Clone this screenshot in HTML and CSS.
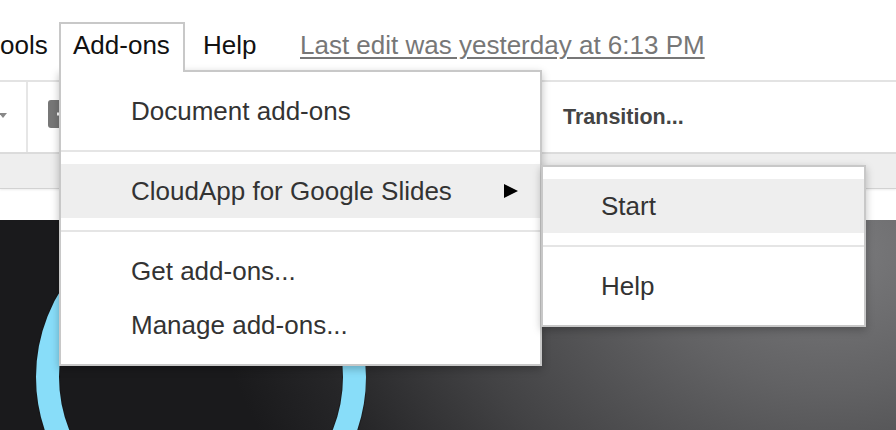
FILE: index.html
```html
<!DOCTYPE html>
<html>
<head>
<meta charset="utf-8">
<link rel="stylesheet" href="styles.css">
</head>
<body>
<div class="app">
  <div class="menubar">
    <span class="mitem tools">ools</span>
    <span class="mitem tab">Add-ons</span>
    <span class="mitem help">Help</span>
    <a class="mitem lastedit">Last edit was yesterday at 6:13 PM</a>
  </div>
  <div class="toolbar">
    <span class="caret"></span>
    <span class="vsep"></span>
    <svg class="newslide" width="30" height="28" viewBox="0 0 30 28">
      <rect x="0" y="0" width="30" height="28" rx="3" fill="#777"/>
      <rect x="9" y="12.5" width="12" height="3" fill="#fff"/>
      <rect x="13.5" y="8" width="3" height="12" fill="#fff"/>
    </svg>
    <span class="transition">Transition...</span>
  </div>
  <div class="strip"></div>
  <div class="gap"></div>
  <div class="slide">
    <svg class="ring" width="330" height="330" viewBox="0 0 330 330">
      <circle cx="165" cy="165" r="153.5" fill="none" stroke="#141416" stroke-width="25" opacity="0.5"/>
      <circle cx="165" cy="165" r="153.5" fill="none" stroke="#88ddf9" stroke-width="23"/>
    </svg>
  </div>

  <div class="menu main">
    <div class="item">Document add-ons</div>
    <div class="sep"></div>
    <div class="item hl">CloudApp for Google Slides<span class="arrow"></span></div>
    <div class="sep"></div>
    <div class="item">Get add-ons...</div>
    <div class="item">Manage add-ons...</div>
  </div>

  <div class="menu sub">
    <div class="item hl">Start</div>
    <div class="sep"></div>
    <div class="item">Help</div>
  </div>
</div>
</body>
</html>
```
FILE: styles.css
```css
html, body {
  margin: 0;
  padding: 0;
  background: #fff;
}
body {
  font-family: "Liberation Sans", Arial, sans-serif;
}
.app {
  position: relative;
  width: 896px;
  height: 430px;
  overflow: hidden;
  background: #fff;
}
.menubar {
  box-sizing: border-box;
  height: 80px;
  padding-top: 22px;
  display: flex;
  align-items: flex-start;
  font-size: 26px;
  color: #111;
}
.mitem {
  display: block;
  flex: none;
  line-height: 43px;
  border-top: 2px solid transparent;
  white-space: nowrap;
}
.tools {
  width: 59px;
}
.tab {
  box-sizing: border-box;
  width: 126px;
  padding: 0 0 5px 12px;
  border: 2px solid #c8c8c8;
  border-bottom: 0;
  background: #fff;
  position: relative;
  z-index: 3;
}
.help {
  margin-left: 18px;
  width: 54px;
}
.lastedit {
  margin-left: 43px;
  color: #777;
  text-decoration: underline;
  text-underline-offset: 3px;
}
.toolbar {
  height: 70px;
  border-top: 2px solid #e3e3e3;
  border-bottom: 2px solid #dcdcdc;
  display: flex;
  align-items: center;
}
.caret {
  width: 0;
  height: 0;
  margin-left: -1px;
  border-top: 5px solid #888;
  border-left: 4px solid transparent;
  border-right: 4px solid transparent;
  margin-top: -4px;
}
.vsep {
  align-self: stretch;
  width: 2px;
  margin-left: 19px;
  background: #e6e6e6;
}
.newslide {
  align-self: flex-start;
  margin-top: 18px;
  margin-left: 20px;
}
.transition {
  margin-left: 485px;
  font-size: 21.5px;
  font-weight: bold;
  color: #444;
}
.strip {
  height: 34px;
  background: #eeeeee;
  border-bottom: 1px solid #d2d2d2;
  box-shadow: 0 1px 2px rgba(0,0,0,0.08);
  position: relative;
}
.gap {
  height: 31px;
  background: #fff;
}
.slide {
  position: relative;
  height: 210px;
  overflow: hidden;
  background:
    radial-gradient(ellipse 620px 460px at 830px 30px, #7b7b7d 0%, #626264 30%, #424244 62%, #262628 85%, #1a1a1c 100%),
    #1a1a1c;
}
.ring {
  position: absolute;
  left: 36px;
  top: -8px;
}
.menu {
  position: absolute;
  box-sizing: border-box;
  background: #fff;
  border: 2px solid #c8c8c8;
  padding: 12px 0;
  box-shadow: 0 3px 8px rgba(0,0,0,0.25);
  font-size: 26px;
  color: #333;
}
.main {
  left: 59px;
  top: 70px;
  width: 483px;
  z-index: 2;
}
.sub {
  left: 541px;
  top: 165px;
  width: 325px;
  z-index: 4;
}
.item {
  display: flex;
  align-items: center;
  height: 54px;
  line-height: 54px;
  white-space: nowrap;
}
.main .item {
  padding-left: 70px;
  padding-right: 22px;
}
.sub .item {
  padding-left: 58px;
}
.hl {
  background: #eeeeee;
}
.sep {
  margin: 12px 0;
  border-top: 2px solid #e5e5e5;
}
.arrow {
  margin-left: auto;
  width: 0;
  height: 0;
  border-left: 14px solid #000;
  border-top: 7px solid transparent;
  border-bottom: 7px solid transparent;
}
```
